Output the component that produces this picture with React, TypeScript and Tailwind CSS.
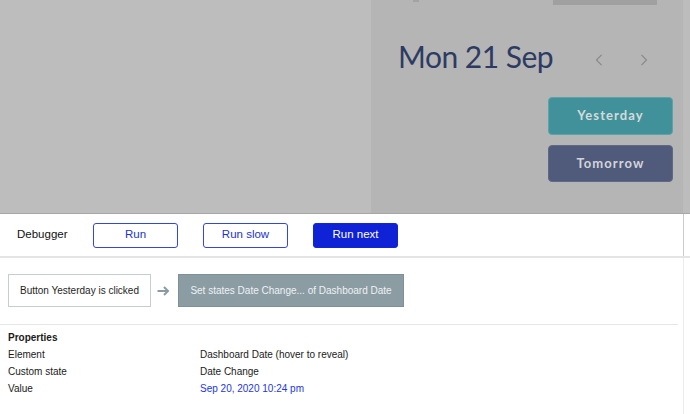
import React from "react";

export default function App() {
  const sans = { fontFamily: '"Liberation Sans", Arial, sans-serif' };
  return (
    <div className="w-[690px] h-[414px] overflow-hidden bg-white" style={sans}>
      {/* Top overlay area */}
      <div className="flex h-[213px] border-b border-[#a6a6a6] box-content">
        <div className="w-[371px] bg-[#bdbdbd]" />
        <div className="w-[312px] bg-[#b5b5b5] flex flex-col" style={{ fontFamily: 'Lato, "Liberation Sans", sans-serif' }}>
          <div className="h-[5px] flex">
            <div className="ml-[42px] mt-0 w-[6px] h-[2px] bg-[#a3a3a3]" />
            <div className="ml-[134px] w-[104px] h-[5px] bg-[#a0a0a0]" />
          </div>
          <div className="mt-[31px] h-[40px] flex pl-[27px]">
            <div className="w-[197px] text-[30px] leading-[40px] tracking-[-0.5px] text-[#2d3b63] whitespace-nowrap">Mon 21 Sep</div>
            <svg width="8" height="12" viewBox="0 0 8 12" className="mt-[18px]">
              <path d="M6.5 0.8 L1.5 6 L6.5 11.2" fill="none" stroke="#878787" strokeWidth="1.1" />
            </svg>
            <svg width="8" height="12" viewBox="0 0 8 12" className="mt-[18px] ml-[37px]">
              <path d="M1.5 0.8 L6.5 6 L1.5 11.2" fill="none" stroke="#878787" strokeWidth="1.1" />
            </svg>
          </div>
          <div className="mt-[21px] self-end mr-[10px] w-[125px] h-[38px] rounded-[4px] bg-[#41919a] border border-[#5aa3aa] flex items-center justify-center text-[13px] font-bold tracking-[1.1px] text-[#d5dbdc]">
            Yesterday
          </div>
          <div className="mt-[10px] self-end mr-[10px] w-[125px] h-[37px] rounded-[4px] bg-[#505a7a] border border-[#5f6886] flex items-center justify-center text-[13px] font-bold tracking-[1.1px] text-[#d3d4da]">
            Tomorrow
          </div>
        </div>
        <div className="flex-1 bg-[#bcbcbc]" />
      </div>

      {/* Debugger bar */}
      <div className="flex border-b-2 border-[#e4e4e4]">
        <div className="w-[684px] h-[42px] border-r border-[#cbcbcb] flex items-center pl-[17px]">
          <span className="w-[76px] text-[11.5px] text-[#111111]">Debugger</span>
          <div className="flex gap-[25px]">
            <button className="w-[85px] h-[25px] rounded-[3px] border border-[#3447dd] text-[11.5px] text-[#2133cc] bg-white">Run</button>
            <button className="w-[85px] h-[25px] rounded-[3px] border border-[#3447dd] text-[11.5px] text-[#2133cc] bg-white">Run slow</button>
            <button className="w-[85px] h-[25px] rounded-[3px] border border-[#1126d4] text-[11.5px] text-white bg-[#0f22d6]">Run next</button>
          </div>
        </div>
      </div>

      {/* Content */}
      <div className="w-[684px] h-[156px] border-r border-[#ececec]">
        <div className="pt-[16px] pl-[8px] flex items-center">
          <div className="w-[143px] h-[33px] border border-[#c6cdd1] flex items-center justify-center text-[10px] text-[#1e1e1e] whitespace-nowrap">
            Button Yesterday is clicked
          </div>
          <svg width="13" height="10" viewBox="0 0 13 10" className="ml-[6px] mr-[8px]">
            <path d="M0.5 5 H11 M7 1 L11 5 L7 9" fill="none" stroke="#8a9ba3" strokeWidth="2" />
          </svg>
          <div className="w-[226px] h-[33px] bg-[#8b9ca3] border border-[#7f9198] flex items-center justify-center text-[10px] text-[#eef2f3] whitespace-nowrap">
            Set states Date Change... of Dashboard Date
          </div>
        </div>
        <div className="mt-[17px] w-[678px] h-px bg-[#e6e6e6]" />
        <div className="pt-[4px] pl-[8px] text-[10px] leading-[17px] text-[#1a1a1a]">
          <div className="font-bold">Properties</div>
          <div className="flex"><span className="w-[192px]">Element</span><span>Dashboard Date (hover to reveal)</span></div>
          <div className="flex"><span className="w-[192px]">Custom state</span><span>Date Change</span></div>
          <div className="flex"><span className="w-[192px]">Value</span><span className="text-[#1b36e4]">Sep 20, 2020 10:24 pm</span></div>
        </div>
      </div>
    </div>
  );
}
